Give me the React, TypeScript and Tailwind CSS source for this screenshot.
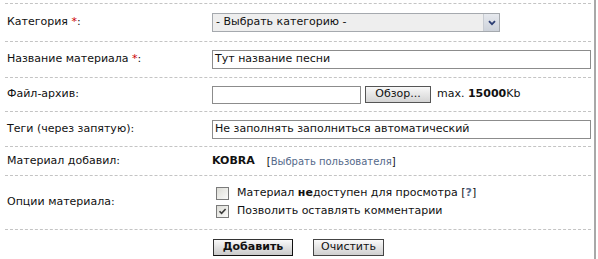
import React from "react";

const font = { fontFamily: '"DejaVu Sans", Verdana, sans-serif' };

function Row({ label, children, className = "" }: { label: React.ReactNode; children: React.ReactNode; className?: string }) {
  return (
    <div className={`flex items-center border-b border-dashed border-[#c4c4c4] ${className}`}>
      <div className="w-[207px] shrink-0 pl-[2px] text-[11px] text-[#111]">{label}</div>
      <div className="flex-1 flex items-center">{children}</div>
    </div>
  );
}

function Star() {
  return <span className="text-[#cc0000]">*</span>;
}

function Checkbox({ checked }: { checked?: boolean }) {
  return (
    <span className="inline-flex w-[13px] h-[13px] border border-[#7b7b7b] bg-gradient-to-br from-[#dcdcd6] to-[#fbfbfa] items-center justify-center mr-[8px]">
      {checked && (
        <svg width="9" height="9" viewBox="0 0 9 9">
          <path d="M1.5 4.2 L3.6 6.4 L7.6 2" stroke="#3d3d3d" strokeWidth="1.6" fill="none" />
        </svg>
      )}
    </span>
  );
}

export default function App() {
  return (
    <div className="w-[598px] h-[259px] bg-white" style={font}>
      <div className="w-[596px] h-[259px] border-r-2 border-[#a8a8a8] pl-[5px] pr-[3px] pt-[3px]">
        <div className="border-t border-dashed border-[#c4c4c4]">
          <Row label={<>Категория <Star />:</>} className="h-[38px]">
            <div className="w-[288px] h-[19px] border border-[#a5a9ae] bg-[#eeeeee] flex items-center justify-between">
              <span className="text-[11px] pl-[3px] text-[#111]">- Выбрать категорию -</span>
              <span className="w-[16px] h-[17px] border-l border-[#c8ccd2] bg-gradient-to-b from-[#e6e9ee] to-[#cdd2da] flex items-center justify-center">
                <svg width="8" height="6" viewBox="0 0 8 6">
                  <path d="M1 1.2 L4 4.2 L7 1.2" stroke="#2c3e73" strokeWidth="1.8" fill="none" />
                </svg>
              </span>
            </div>
          </Row>
          <Row label={<>Название материала <Star />:</>} className="h-[36px]">
            <div className="w-[379px] h-[19px] border border-[#8c8c8c] bg-white flex items-center text-[11px] pl-[2px] text-[#111]">
              Тут название песни
            </div>
          </Row>
          <Row label="Файл-архив:" className="h-[34px]">
            <div className="w-[149px] h-[18px] border border-[#8c8c8c] bg-white" />
            <div className="ml-[4px] w-[66px] h-[17px] border border-[#555] bg-gradient-to-b from-[#f8f8f8] to-[#d4d4d4] text-[11px] flex items-center justify-center text-[#111]">
              Обзор...
            </div>
            <span className="ml-[6px] text-[11px] text-[#111]">
              max. <b>15000</b>Kb
            </span>
          </Row>
          <Row label="Теги (через запятую):" className="h-[35px]">
            <div className="w-[379px] h-[19px] border border-[#8c8c8c] bg-white flex items-center text-[11px] pl-[2px] text-[#111]">
              Не заполнять заполниться автоматический
            </div>
          </Row>
          <Row label="Материал добавил:" className="h-[29px]">
            <b className="text-[11px] text-[#111]">KOBRA</b>
            <span className="ml-[12px] text-[10px] text-[#111]">
              [<span className="text-[#54698a]">Выбрать пользователя</span>]
            </span>
          </Row>
          <Row label="Опции материала:" className="h-[54px]">
            <div className="flex flex-col gap-[5px] pl-[4px] text-[11px] text-[#111]">
              <div className="flex items-center h-[13px]">
                <Checkbox />
                <span>
                  Материал <b>не</b>доступен для просмотра [<b className="text-[#54698a]">?</b>]
                </span>
              </div>
              <div className="flex items-center h-[13px]">
                <Checkbox checked />
                <span>Позволить оставлять комментарии</span>
              </div>
            </div>
          </Row>
        </div>
        <div className="flex items-center pl-[208px] pt-[9px] gap-[20px]">
          <div className="w-[80px] h-[17px] border border-[#333] border-b-[#111] border-r-[#111] bg-gradient-to-b from-[#fafafa] to-[#c9c9c9] text-[11px] font-bold flex items-center justify-center text-[#111]">
            Добавить
          </div>
          <div className="w-[71px] h-[17px] border border-[#444] bg-gradient-to-b from-[#fafafa] to-[#cfcfcf] text-[11px] flex items-center justify-center text-[#111]">
            Очистить
          </div>
        </div>
      </div>
    </div>
  );
}
